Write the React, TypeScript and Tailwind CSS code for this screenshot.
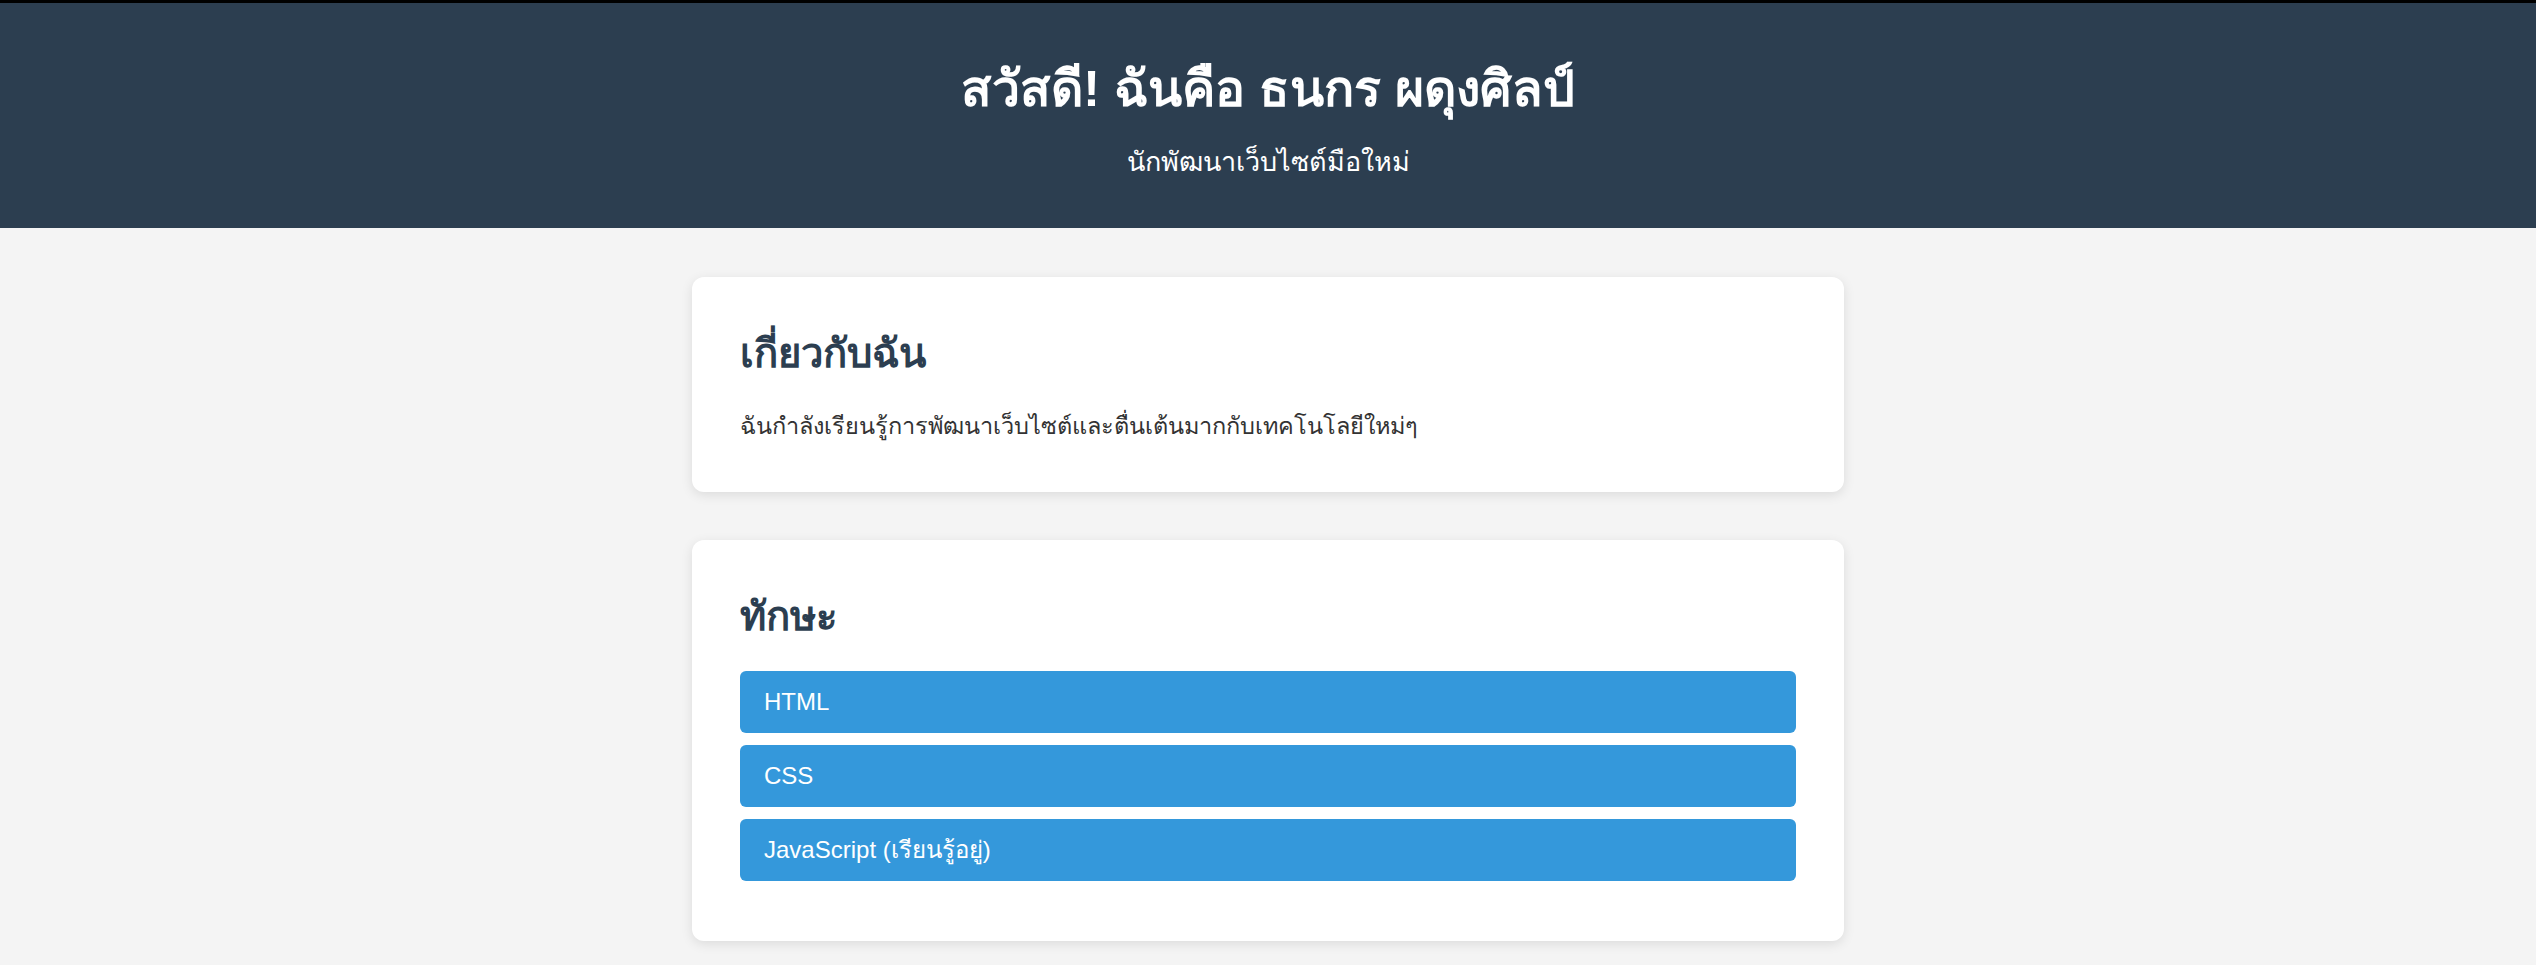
import React from "react";

const skills = ["HTML", "CSS", "JavaScript (เรียนรู้อยู่)"];

export default function App() {
  return (
    <div className="min-h-screen bg-[#f4f4f4] text-[24px] text-[#333] font-['Liberation_Sans',Arial,sans-serif] leading-[1.5]">
      <div className="h-[3px] bg-black" />
      <header className="bg-[#2c3e50] text-white text-center h-[225px] flex flex-col items-center pt-[56px]">
        <h1 className="text-[50px] font-bold leading-[60px]">สวัสดี! ฉันคือ ธนกร ผดุงศิลป์</h1>
        <p className="mt-[23px] text-[27px] leading-[40px]">นักพัฒนาเว็บไซต์มือใหม่</p>
      </header>

      <main className="w-[1152px] mx-auto pt-[49px] pb-[24px] flex flex-col gap-[48px]">
        <section className="bg-white rounded-[12px] shadow-[0_3px_12px_rgba(0,0,0,0.1)] p-[48px]">
          <h2 className="text-[40px] font-bold text-[#2c3e50] leading-[56px]">เกี่ยวกับฉัน</h2>
          <p className="mt-[27px] text-[23.5px] leading-[36px]">ฉันกำลังเรียนรู้การพัฒนาเว็บไซต์และตื่นเต้นมากกับเทคโนโลยีใหม่ๆ</p>
        </section>

        <section className="bg-white rounded-[12px] shadow-[0_3px_12px_rgba(0,0,0,0.1)] p-[48px]">
          <h2 className="text-[40px] font-bold text-[#2c3e50] leading-[56px]">ทักษะ</h2>
          <ul className="mt-[27px] flex flex-col gap-[12px] pb-[12px]">
            {skills.map((s) => (
              <li key={s} className="bg-[#3498db] text-white rounded-[6px] px-[24px] h-[62px] flex items-center">
                {s}
              </li>
            ))}
          </ul>
        </section>
      </main>
    </div>
  );
}
